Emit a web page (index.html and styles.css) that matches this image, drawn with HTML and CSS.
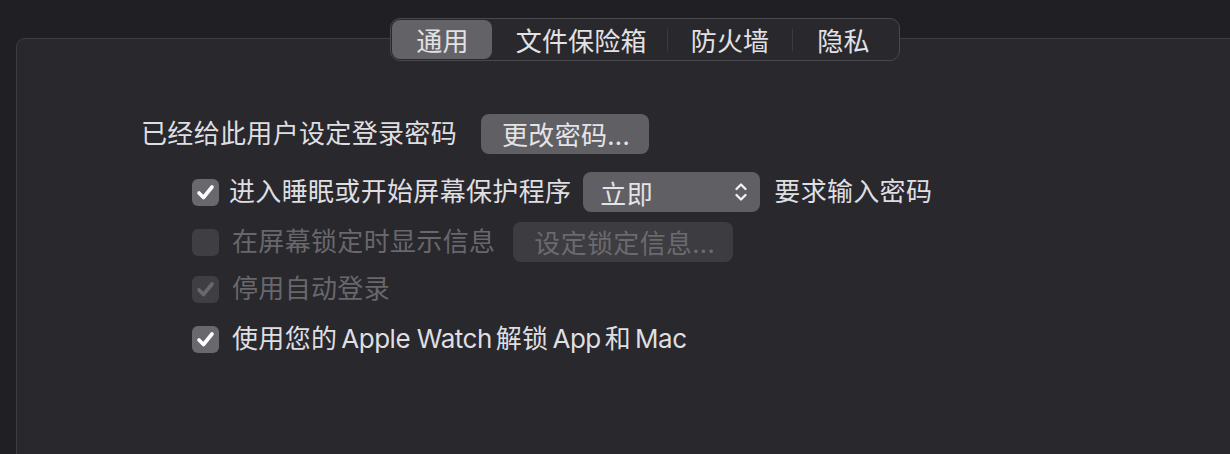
FILE: index.html
```html
<!DOCTYPE html>
<html lang="zh-CN">
<head>
<meta charset="utf-8">
<title>安全性与隐私</title>
<link rel="stylesheet" href="styles.css">
</head>
<body>
<div class="window">
  <div class="panel">
    <div class="tabs">
      <div class="tab selected">通用</div>
      <div class="tab">文件保险箱</div>
      <div class="sep"></div>
      <div class="tab">防火墙</div>
      <div class="sep"></div>
      <div class="tab">隐私</div>
    </div>
    <div class="content">
      <div class="row row1">
        <span class="label">已经给此用户设定登录密码</span>
        <button class="btn btn-pw">更改密码...</button>
      </div>
      <div class="row check-row row2">
        <span class="box on"><svg viewBox="0 0 27 27" width="27" height="27"><path d="M7 14 L11.5 18.5 L20 8" /></svg></span>
        <span class="label l2">进入睡眠或开始屏幕保护程序</span>
        <div class="popup">
          <span>立即</span>
          <svg class="chev" viewBox="0 0 14 22" width="14" height="22"><path d="M2.5 8 L7 3.5 L11.5 8 M2.5 14 L7 18.5 L11.5 14"/></svg>
        </div>
        <span class="label l2b">要求输入密码</span>
      </div>
      <div class="row check-row row3">
        <span class="box dis"></span>
        <span class="label dim">在屏幕锁定时显示信息</span>
        <button class="btn btn-dis">设定锁定信息...</button>
      </div>
      <div class="row check-row row4">
        <span class="box dis"><svg viewBox="0 0 27 27" width="27" height="27"><path d="M7 14 L11.5 18.5 L20 8" /></svg></span>
        <span class="label dim">停用自动登录</span>
      </div>
      <div class="row check-row row5">
        <span class="box on"><svg viewBox="0 0 27 27" width="27" height="27"><path d="M7 14 L11.5 18.5 L20 8" /></svg></span>
        <span class="label">使用您的<span class="lat">Apple Watch</span>解锁<span class="lat">App</span>和<span class="lat">Mac</span></span>
      </div>
    </div>
  </div>
</div>
</body>
</html>
```
FILE: styles.css
```css
html, body {
  margin: 0;
  padding: 0;
}
body {
  width: 1230px;
  height: 454px;
  overflow: hidden;
  background: #201f24;
  font-family: Inter, "Noto Sans CJK SC", sans-serif;
  font-size: 26px;
  letter-spacing: 0.33px;
  color: #dfdee0;
}
.window {
  padding: 38px 0 0 16px;
}
.panel {
  width: 1256px;
  height: 415px;
  border: 1px solid #3d3c41;
  border-bottom: none;
  border-radius: 9px 9px 0 0;
  background: #29282d;
  display: flex;
  flex-direction: column;
}
.tabs {
  align-self: center;
  margin-top: -21px;
  display: flex;
  align-items: center;
  height: 41px;
  padding: 0 1px;
  border: 1px solid #49484d;
  border-radius: 10px;
  background: #29282d;
  letter-spacing: 0.2px;
}
.tab {
  height: 39px;
  line-height: 39px;
  padding: 0 23px;
  border-radius: 8px;
  color: #e2e1e3;
  font-family: "Noto Sans CJK SC", sans-serif;
}
.tab.selected {
  background: #636267;
  padding: 0 23px 0 24px;
}
.tab:nth-child(2) {
  padding: 0 20px 0 24px;
}
.tab:last-child {
  padding: 0 28px 0 24px;
}
.sep {
  width: 1px;
  height: 22px;
  background: #3b3a3f;
}
.content {
  display: flex;
  flex-direction: column;
  padding: 0 0 0 124px;
}
.row {
  display: flex;
  align-items: center;
  height: 40px;
}
.row1 { margin-top: 53px; }
.row2 { margin-top: 18px; }
.row3 { margin-top: 10px; }
.row4 { margin-top: 7px; }
.row5 { margin-top: 10px; }
.check-row {
  padding-left: 51px;
}
.label {
  white-space: nowrap;
  line-height: 40px;
}
.check-row .label {
  margin-left: 13px;
}
.check-row .l2 {
  margin-left: 10px;
}
.label.dim {
  color: #68676c;
}
.lat {
  letter-spacing: -0.5px;
  margin: 0 4px;
}
.btn {
  height: 40px;
  border: none;
  border-radius: 8px;
  font: inherit;
  font-family: "Noto Sans CJK SC", sans-serif;
  letter-spacing: 0.33px;
  line-height: 40px;
  padding: 0;
  text-align: left;
}
.btn-pw {
  margin-left: 24px;
  width: 168px;
  padding-left: 21px;
  background: #605f64;
  color: #e4e3e5;
}
.btn-dis {
  margin-left: 18px;
  width: 220px;
  padding-left: 21px;
  background: #3d3c41;
  color: #6b6a6f;
}
.box {
  width: 27px;
  height: 27px;
  border-radius: 6px;
  display: flex;
  flex-shrink: 0;
}
.box svg path {
  fill: none;
  stroke-width: 3.6;
  stroke-linecap: round;
  stroke-linejoin: round;
}
.box.on {
  background: #69686d;
}
.box.on svg path {
  stroke: #ffffff;
}
.box.dis {
  background: #3f3e43;
}
.box.dis svg path {
  stroke: #69686d;
}
.popup {
  margin-left: 12px;
  width: 177px;
  height: 40px;
  box-sizing: border-box;
  border-radius: 8px;
  background: #605f64;
  display: flex;
  align-items: center;
  justify-content: space-between;
  padding: 0 12px 0 17px;
  color: #e4e3e5;
  font-family: "Noto Sans CJK SC", sans-serif;
}
.chev path {
  fill: none;
  stroke: #f0eff1;
  stroke-width: 2.4;
  stroke-linecap: round;
  stroke-linejoin: round;
}
.check-row .l2b {
  margin-left: 14px;
}
```
